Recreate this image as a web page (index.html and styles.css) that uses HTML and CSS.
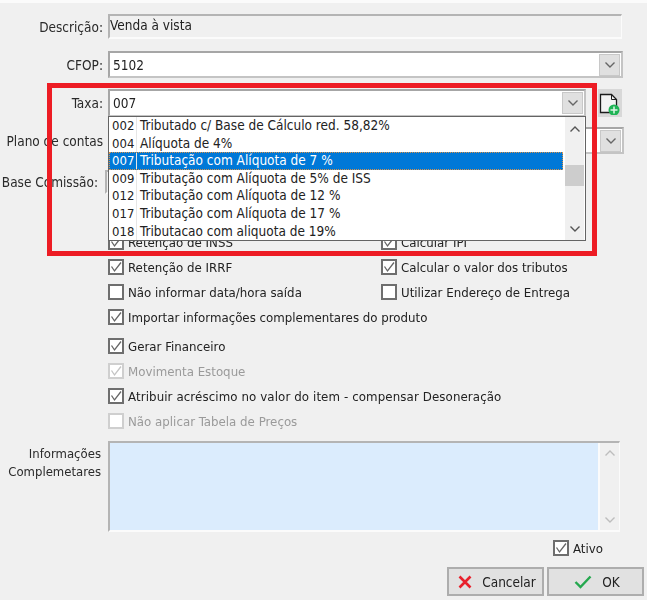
FILE: index.html
```html
<!DOCTYPE html>
<html lang="pt">
<head>
<meta charset="utf-8">
<title>Natureza de operação</title>
<link rel="stylesheet" href="styles.css">
</head>
<body>
<svg class="defs" width="0" height="0">
  <symbol id="chev" viewBox="0 0 12 8"><path d="M1.5 1.5 6 6l4.5-4.5" fill="none" stroke="currentColor" stroke-width="1.4"/></symbol>
  <symbol id="tick" viewBox="0 0 12 12"><path d="M1.5 5.5 4.5 10 11 1.5" fill="none" stroke="currentColor" stroke-width="1.3"/></symbol>
</svg>
<main class="page">
  <div class="row row-desc">
    <label class="lbl">Descrição:</label>
    <div class="readonly">Venda à vista</div>
  </div>
  <div class="row row-cfop">
    <label class="lbl">CFOP:</label>
    <div class="combo combo-cfop"><span class="val">5102</span><span class="arrow"><svg class="chev"><use href="#chev"/></svg></span></div>
  </div>
  <div class="row row-taxa">
    <label class="lbl">Taxa:</label>
    <div class="taxa-wrap">
      <div class="combo combo-taxa"><span class="val">007</span><span class="arrow"><svg class="chev"><use href="#chev"/></svg></span></div>
      <button class="add" type="button" aria-label="Novo">
        <svg width="22" height="24" viewBox="0 0 22 24">
          <path d="M1.5 3.5h11l5 5v13h-16z" fill="#f4f4f4" stroke="#1c1c1c" stroke-width="1.3"/>
          <path d="M12.500 3.500v5h5" fill="none" stroke="#1c1c1c" stroke-width="1"/>
          <circle cx="15" cy="19" r="5.500" fill="#1fb455"/>
          <path d="M15 15.500v7M11.500 19h7" stroke="#dff5e6" stroke-width="1.500"/>
        </svg>
      </button>
    </div>
  </div>
  <div class="row row-plano">
    <label class="lbl">Plano de contas</label>
    <div class="combo combo-plano"><span class="val"></span><span class="arrow"><svg class="chev"><use href="#chev"/></svg></span></div>
  </div>
  <div class="row row-base">
    <label class="lbl lbl-base">Base Comissão:</label>
    <div class="readonly base-field"></div>
  </div>
  <div class="row row-hidden">
    <span></span>
    <div class="hidden-field"></div>
  </div>

  <div class="checks">
    <div class="chk-grid">
      <label class="chk"><span class="box on"><svg class="tick"><use href="#tick"/></svg></span>Retenção de INSS</label>
      <label class="chk"><span class="box on"><svg class="tick"><use href="#tick"/></svg></span>Calcular IPI</label>
      <label class="chk"><span class="box on"><svg class="tick"><use href="#tick"/></svg></span>Retenção de IRRF</label>
      <label class="chk"><span class="box on"><svg class="tick"><use href="#tick"/></svg></span>Calcular o valor dos tributos</label>
      <label class="chk"><span class="box"></span>Não informar data/hora saída</label>
      <label class="chk"><span class="box"></span>Utilizar Endereço de Entrega</label>
    </div>
    <label class="chk"><span class="box on"><svg class="tick"><use href="#tick"/></svg></span>Importar informações complementares do produto</label>
    <label class="chk chk-gap"><span class="box on"><svg class="tick"><use href="#tick"/></svg></span>Gerar Financeiro</label>
    <label class="chk off"><span class="box on"><svg class="tick"><use href="#tick"/></svg></span>Movimenta Estoque</label>
    <label class="chk chk-wide"><span class="box on"><svg class="tick"><use href="#tick"/></svg></span>Atribuir acréscimo no valor do item - compensar Desoneração</label>
    <label class="chk off"><span class="box"></span>Não aplicar Tabela de Preços</label>
  </div>

  <div class="row row-info">
    <label class="lbl lbl-info">Informações<br>Complemetares</label>
    <div class="memo">
      <div class="memo-bar">
        <svg class="chev up"><use href="#chev"/></svg>
        <svg class="chev"><use href="#chev"/></svg>
      </div>
    </div>
  </div>

  <div class="ativo"><label class="chk"><span class="box on"><svg class="tick"><use href="#tick"/></svg></span>Ativo</label></div>

  <div class="actions">
    <button class="btn" type="button">
      <svg width="14" height="14" viewBox="0 0 14 14"><path d="M1.500 1.500l11 11M12.500 1.500l-11 11" stroke="#e8202c" stroke-width="2.600"/></svg>
      <span>Cancelar</span>
    </button>
    <button class="btn" type="button">
      <svg width="18" height="14" viewBox="0 0 18 14"><path d="M1.500 7l5 5L16.500 1.500" fill="none" stroke="#25a84f" stroke-width="2.400"/></svg>
      <span>OK</span>
    </button>
  </div>

  <div class="dropdown">
    <ul class="list">
      <li><span class="code">002</span><span class="desc">Tributado c/ Base de Cálculo red. 58,82%</span></li>
      <li><span class="code">004</span><span class="desc">Alíquota de 4%</span></li>
      <li class="sel"><span class="code">007</span><span class="desc">Tributação com Alíquota de 7 %</span></li>
      <li><span class="code">009</span><span class="desc">Tributação com Alíquota de 5% de ISS</span></li>
      <li><span class="code">012</span><span class="desc">Tributação com Alíquota de 12 %</span></li>
      <li><span class="code">017</span><span class="desc">Tributação com Alíquota de 17 %</span></li>
      <li><span class="code">018</span><span class="desc">Tributacao com aliquota de 19%</span></li>
    </ul>
    <div class="scroll">
      <svg class="chev up dark"><use href="#chev"/></svg>
      <div class="thumb"></div>
      <svg class="chev dark"><use href="#chev"/></svg>
    </div>
  </div>
  <div class="highlight"></div>
</main>
</body>
</html>
```
FILE: styles.css
```css
* { box-sizing: border-box; }
html, body { margin: 0; padding: 0; }
body {
  background: #f0f0f0;
  font-family: "DejaVu Sans", sans-serif;
  font-stretch: condensed;
  font-size: 13.5px;
  color: #222;
  overflow: hidden;
}
.defs { position: absolute; }
.page {
  position: relative;
  width: 647px;
  height: 600px;
  padding-top: 14px;
  box-shadow: inset 0 3px #fbfbfb;
  overflow: hidden;
  filter: blur(0.35px);
}
.row {
  display: grid;
  grid-template-columns: 103px 1fr;
  column-gap: 5px;
}
.lbl {
  text-align: right;
  white-space: nowrap;
  align-self: center;
  color: #2a2a2a;
}
.row-desc { height: 25px; }
.row-cfop { height: 27px; margin-top: 12px; }
.row-taxa { height: 28px; margin-top: 11px; }
.row-plano { height: 27px; margin-top: 10px; }
.row-base { height: 24px; margin-top: 16px; grid-template-columns: 98px 1fr; column-gap: 7px; }
.row-hidden { height: 17px; margin-top: 14px; }
.readonly {
  width: 514px;
  height: 25px;
  border-top: 2px solid #b4b4b4;
  border-left: 2px solid #b4b4b4;
  border-right: 1px solid #fbfbfb;
  border-bottom: 2px solid #fbfbfb;
  line-height: 18px;
}
.base-field { width: 120px; height: 24px; }
.hidden-field { width: 60px; border-left: 2px solid #b4b4b4; height: 17px; }
.combo {
  display: flex;
  align-items: center;
  justify-content: space-between;
  background: #fff;
  border: 2px solid #a6a6a6;
  border-right-color: #c4c4c4;
  border-bottom-color: #c4c4c4;
  padding: 0 1px 0 3px;
  height: 100%;
}
.combo-cfop { width: 515px; }
.combo-taxa { width: 478px; padding-left: 3px; }
.combo-plano { width: 516px; }
.val { color: #222; }
.arrow {
  display: flex;
  align-items: center;
  justify-content: center;
  width: 21px;
  height: 22px;
  background: #e0e0e0;
  border: 1px solid #c8c8c8;
  color: #666;
}
.chev { width: 12px; height: 8px; display: block; color: #666; }
.chev.up { transform: scaleY(-1); }
.taxa-wrap { display: flex; gap: 12px; height: 28px; }
.add {
  width: 24px;
  height: 28px;
  padding: 0;
  border: 0;
  background: #d8d8d8;
  display: flex;
  align-items: center;
  justify-content: center;
}
.checks { margin-top: 4.5px; padding-left: 108px; }
.chk-grid { display: grid; grid-template-columns: 273px 1fr; }
.chk {
  display: flex;
  align-items: center;
  height: 25px;
  gap: 4px;
  white-space: nowrap;
  color: #222;
  font-size: 13.15px;
}
.chk-wide { letter-spacing: 0.1px; }
.chk-gap { margin-top: 4px; }
.box {
  flex: none;
  width: 16px;
  height: 16px;
  background: #fff;
  border: 2px solid #6e6e6e;
  display: flex;
  align-items: center;
  justify-content: center;
  color: #666;
}
.tick { width: 12px; height: 12px; display: block; }
.off { color: #9a9a9a; }
.off .box { border-color: #cfcfcf; color: #c4c4c4; }
.row-info { height: 91px; margin-top: 7.5px; }
.lbl-info { align-self: start; line-height: 18px; padding: 4px 2px 0 0; font-size: 13px; }
.memo {
  width: 512px;
  height: 91px;
  background: #dbecfd;
  border-top: 2px solid #b4b4b4;
  border-left: 2px solid #b4b4b4;
  border-right: 1px solid #fbfbfb;
  border-bottom: 2px solid #fbfbfb;
  display: flex;
  justify-content: flex-end;
}
.memo-bar {
  width: 21px;
  background: #f0f0f0;
  border-left: 2px solid #fbfbfb;
  display: flex;
  flex-direction: column;
  justify-content: space-between;
  align-items: center;
  padding: 6px 0;
}
.memo-bar .chev { color: #bdbdbd; }
.ativo { margin-top: 8px; padding-left: 553px; height: 16px; display: flex; align-items: center; }
.actions { display: flex; gap: 3px; margin-top: 11px; padding-left: 447px; }
.btn {
  width: 97px;
  height: 29px;
  background: #e1e1e1;
  border: 2px solid #adadad;
  display: flex;
  align-items: center;
  justify-content: center;
  gap: 10px;
  font: inherit;
  color: #222;
  padding: 0 0 0 3px;
}
.dropdown {
  position: absolute;
  left: 108px;
  top: 116px;
  width: 478px;
  height: 125px;
  background: #fff;
  border: 1px solid #646464;
  display: flex;
}
.list {
  list-style: none;
  margin: 0 2px 0 0;
  padding: 0;
  width: 454px;
}
.list li {
  display: flex;
  height: 17.6px;
  line-height: 17.6px;
  white-space: nowrap;
  color: #222;
}
.code { width: 28px; padding-left: 3px; border-right: 1px solid #e6e6e6; flex: none; font-size: 13px; }
.desc { padding-left: 3px; }
.list li.sel {
  background: #0078d7;
  color: #fff;
  outline: 1px dotted #d9924a;
  outline-offset: -1px;
}
.scroll {
  width: 19px;
  background: #f0f0f0;
  display: flex;
  flex-direction: column;
  align-items: center;
  padding: 8px 0 7px;
}
.chev.dark { color: #555; }
.thumb {
  width: 19px;
  height: 21px;
  background: #cdcdcd;
  margin-top: 32px;
  margin-bottom: auto;
}
.highlight {
  position: absolute;
  left: 47px;
  top: 83px;
  width: 550px;
  height: 173px;
  border: 5px solid #ed1c24;
  pointer-events: none;
}
```
